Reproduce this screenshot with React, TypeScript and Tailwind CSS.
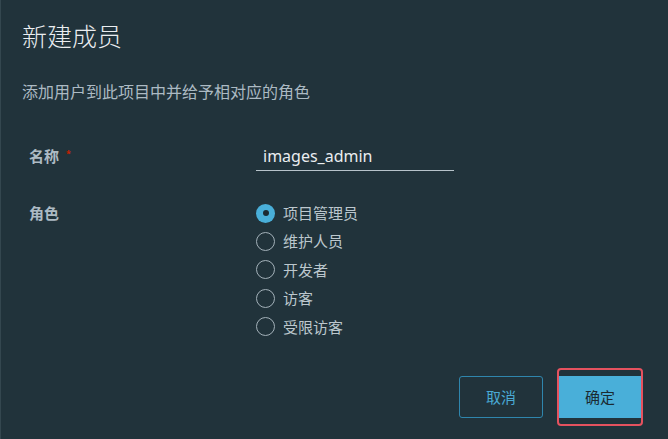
import React from 'react';

const roles = ['项目管理员', '维护人员', '开发者', '访客', '受限访客'];

function App() {
  return (
    <div
      className="w-[668px] h-[439px] bg-[#21333b] border-l border-[#34474f] flex flex-col overflow-hidden"
      style={{ fontFamily: '"Noto Sans", "Noto Sans CJK SC", sans-serif' }}
    >
      <h1 className="pt-[20px] pl-[21px] text-[25px] leading-[32px] font-light text-[#eaedf0]">新建成员</h1>
      <p className="mt-[28px] pl-[21px] text-[16px] leading-[24px] text-[#acbac3]">
        添加用户到此项目中并给予相对应的角色
      </p>

      {/* name row */}
      <div className="mt-[37px] flex items-center h-[30px]">
        <div className="w-[255px] pl-[28px] flex items-start text-[15px] font-bold text-[#adbbc4]">
          名称
          <span className="ml-[7px] mt-[3px] text-[9px] leading-[12px] text-[#c92100]">*</span>
        </div>
        <div className="w-[198px] h-[30px] flex items-center pl-[7px] border-b border-[#b7c3ca] text-[16px] text-[#eaedf0]">
          images_admin
        </div>
      </div>

      {/* role row */}
      <div className="mt-[28px] flex">
        <div className="w-[255px] pl-[28px] h-[28.4px] flex items-center text-[15px] font-bold text-[#adbbc4]">
          角色
        </div>
        <div className="flex flex-col">
          {roles.map((r, i) => (
            <div key={r} className="h-[28.4px] flex items-center gap-[8px]">
              {i === 0 ? (
                <span className="w-[19px] h-[19px] rounded-full bg-[#49afd9] flex items-center justify-center">
                  <span className="w-[6px] h-[6px] rounded-full bg-[#1b2a32]" />
                </span>
              ) : (
                <span className="w-[19px] h-[19px] rounded-full border border-[#a3b1b9]" />
              )}
              <span className="text-[15px] text-[#bcc7cd]">{r}</span>
            </div>
          ))}
        </div>
      </div>

      {/* buttons */}
      <div className="mt-[27px] flex justify-end items-center gap-[14px] pr-[25px]">
        <button className="w-[84px] h-[42px] rounded-[3px] border border-[#2f86ad] text-[15px] text-[#49a9d3]">
          取消
        </button>
        <div className="border-2 border-[#e5525f] rounded-[4px] py-[6px]">
          <button className="w-[82px] h-[42px] bg-[#49afd9] text-[15px] text-[#1b2a32]">确定</button>
        </div>
      </div>
    </div>
  );
}

export default App;
